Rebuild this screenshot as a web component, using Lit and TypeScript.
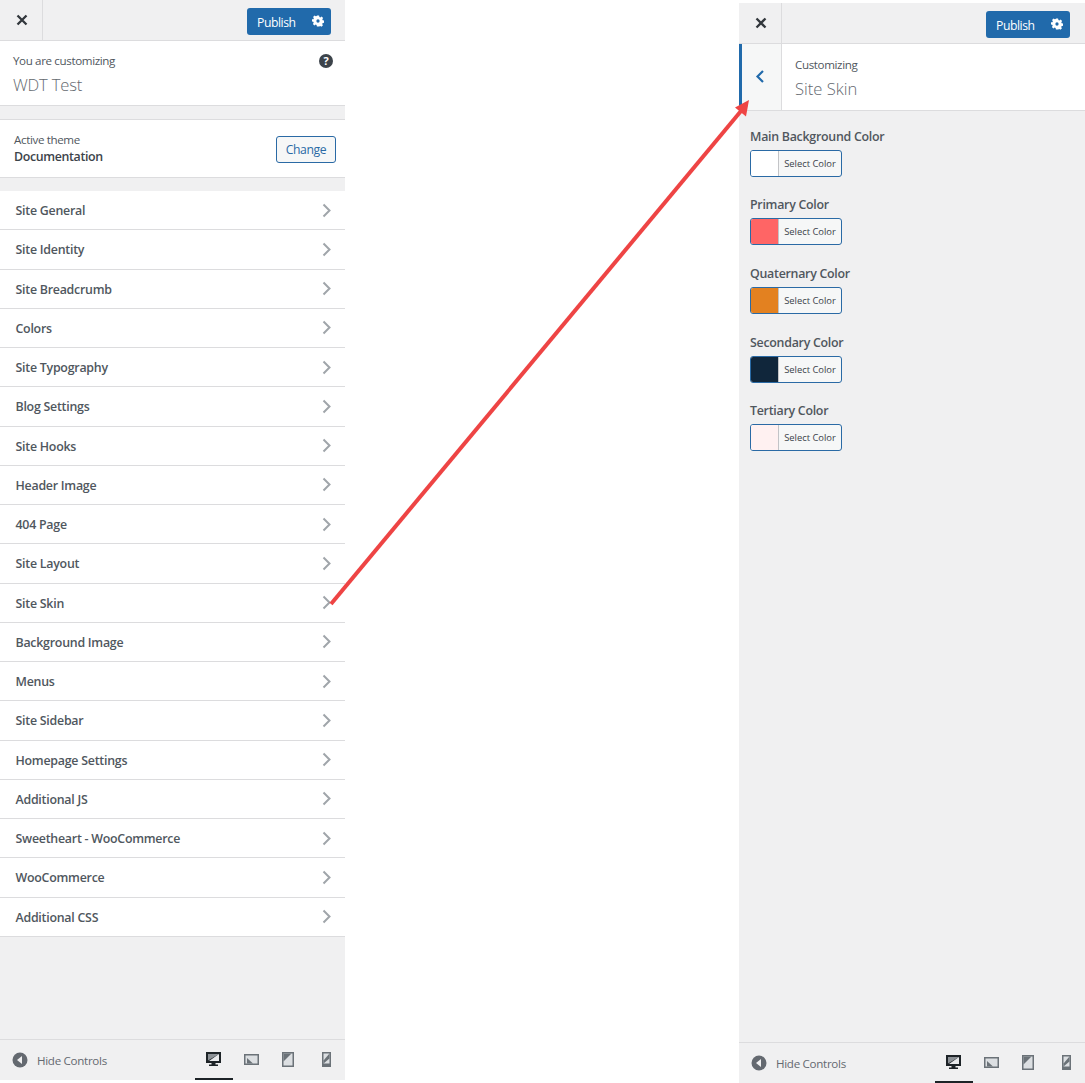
import { LitElement, html, css, svg } from "lit";
import { customElement } from "lit/decorators.js";

const SECTIONS = ["Site General","Site Identity","Site Breadcrumb","Colors","Site Typography","Blog Settings","Site Hooks","Header Image","404 Page","Site Layout","Site Skin","Background Image","Menus","Site Sidebar","Homepage Settings","Additional JS","Sweetheart - WooCommerce","WooCommerce","Additional CSS"];
const COLORS: [string, string][] = [["Main Background Color","#ffffff"],["Primary Color","#ff6565"],["Quaternary Color","#e38120"],["Secondary Color","#10263b"],["Tertiary Color","#fff1f1"]];

const closeIcon = html`<svg class="x" width="12" height="12" viewBox="0 0 12 12"><path d="M1.5 1.5l9 9M10.5 1.5l-9 9" stroke="#32373c" stroke-width="2.3" fill="none"/></svg>`;
const gear = html`<svg class="gear" width="12" height="12" viewBox="-1 0 22 20"><path fill="#fff" fill-rule="evenodd" d="M8 0h4l.6 2.700 1.700.7 2.300-1.500 2.800 2.800-1.500 2.300.7 1.700 2.400.6v4l-2.700.6-.7 1.700 1.500 2.300-2.800 2.800-2.300-1.500-1.700.7L12 20H8l-.6-2.700-1.700-.7-2.300 1.500L.6 15.300l1.500-2.300-.7-1.700L-1 10.700v-4l2.700 0 .7-1.700L.9 2.700 3.700-.1 6 1.400l1.700-.7z M10 13a3 3 0 100-6 3 3 0 000 6z"/></svg>`;

const devices = [
  svg`<path fill="#1d2327" d="M0 0h15v11H9.500v1.500H12V14H3v-1.500h2.500V11H0z"/><path fill="#8c9196" d="M2 2h11L2 8.500z"/><path fill="#e9eaec" d="M13 2v7H3z"/>`,
  svg`<path fill="#6b7278" d="M0 2h15v11H0z"/><path fill="#dcdfe2" d="M1.500 3.500h12v8h-12z"/><path fill="#6b7278" d="M3 6l6 5.500H3z"/>`,
  svg`<path fill="#6b7278" d="M1 0h12v15H1z"/><path fill="#dcdfe2" d="M2.500 1.500h9v12h-9z"/><path fill="#6b7278" d="M2.500 1.500h8l-8 8z"/>`,
  svg`<path fill="#6b7278" d="M3 0h9v15H3z"/><path fill="#dcdfe2" d="M4.500 1.500h6v10h-6z"/><path fill="#6b7278" d="M10.500 1.500v5l-6 5v-3z"/>`,
];

const footer = html`<div class="footer">
  <div class="hide">
    <svg width="16" height="16" viewBox="0 0 16 16"><circle cx="8" cy="8" r="7.500" fill="#646970"/><path d="M10 4v8L5 8z" fill="#f0f0f1"/></svg>
    <span>Hide Controls</span>
  </div>
  <div class="devices">
    ${devices.map((d, i) => html`<div class="dev ${i === 0 ? "on" : ""}"><svg width="15" height="15" viewBox="0 0 15 15">${d}</svg></div>`)}
  </div>
</div>`;

const publish = html`<div class="publish"><span>Publish</span>${gear}</div>`;
const chevron = html`<svg class="chev" width="10" height="15" viewBox="0 0 10 15"><path d="M1.500 1.500l6 6-6 6" fill="none" stroke="#a0a5aa" stroke-width="2"/></svg>`;

@customElement("app-root")
export class AppRoot extends LitElement {
  static styles = css`
    :host { display: block; position: relative; width: 1085px; height: 1083px; background: #fff; font-family: "Open Sans", "Noto Sans", sans-serif; color: #50575e; overflow: hidden; }
    * { box-sizing: border-box; }
    .page { display: flex; justify-content: space-between; }
    .panel { width: 345px; height: 1080px; background: #f0f0f1; display: flex; flex-direction: column; }
    .right { width: 346px; margin-top: 3px; }
    .top { height: 41px; display: flex; align-items: center; justify-content: space-between; border-bottom: 1px solid #dcdcde; padding-right: 14px; flex: none; }
    .close { width: 43px; height: 40px; border-right: 1px solid #dcdcde; display: flex; align-items: center; justify-content: center; padding-left: 1px; }
    .right .top { padding-right: 15px; }
    .publish { width: 84px; height: 27px; margin-top: 2px; background: #216aab; border-radius: 3px; color: #fff; display: flex; align-items: center; justify-content: space-between; padding: 0 7px 0 10px; font-size: 12.2px; letter-spacing: -0.45px; }
    .publish span { padding-top: 2px; }
    .gear { margin-top: -1px; }
    .info { height: 65px; background: #fff; border-bottom: 1px solid #dcdcde; padding: 11px 13px 0; position: relative; flex: none; }
    .small { font-size: 11.6px; line-height: 18px; color: #50575e; letter-spacing: -0.37px; }
    .title { font-size: 16.6px; line-height: 24px; margin-top: 3px; color: #646970; font-weight: 300; letter-spacing: -0.2px; }
    .help { position: absolute; right: 12px; top: 13px; }
    .spacer1 { height: 13px; flex: none; }
    .theme { height: 59px; background: #fff; border-top: 1px solid #dcdcde; border-bottom: 1px solid #dcdcde; display: flex; align-items: center; justify-content: space-between; padding: 0 9px 0 14px; flex: none; }
    .theme .small { line-height: 16px; }
    .theme b { display: block; font-size: 12.4px; font-weight: 600; line-height: 17px; color: #3c434a; letter-spacing: -0.35px; }
    .change { width: 60px; height: 27px; margin-top: 2px; border: 1px solid #2a6aa5; border-radius: 3px; background: #f6f7f7; color: #2a6aa5; font-size: 12.2px; letter-spacing: -0.4px; display: flex; align-items: center; justify-content: center; }
    .spacer2 { height: 13px; flex: none; }
    .list { flex: none; }
    .row { height: 39.25px; background: #fff; border-bottom: 1px solid #dcdcde; padding: 0 13px 0 15.500px; display: flex; align-items: center; justify-content: space-between; font-size: 12.4px; font-weight: 600; color: #50575e; letter-spacing: -0.25px; }
    .row span { padding-top: 1px; }
    .chev { flex: none; }
    .footer { margin-top: auto; height: 41px; border-top: 1px solid #dcdcde; display: flex; align-items: center; justify-content: space-between; flex: none; position: relative; }
    .hide { display: flex; align-items: center; gap: 9px; padding-left: 12px; font-size: 11.6px; color: #646970; letter-spacing: -0.3px; }
    .devices { display: flex; align-self: stretch; }
    .dev { width: 37.500px; display: flex; align-items: center; justify-content: center; border-bottom: 2px solid transparent; }
    .dev.on { border-bottom-color: #1d2327; }
    .sec { height: 67px; background: #fff; border-bottom: 1px solid #dcdcde; display: flex; flex: none; }
    .back { width: 43px; border-left: 3px solid #216aab; border-right: 1px solid #dcdcde; background: #f6f7f7; display: flex; align-items: center; justify-content: center; padding: 0 3px 2px 0; }
    .sec-text { padding: 12px 13px; }
    .sec-text .title { margin-top: 3px; letter-spacing: 0; }
    .controls { padding: 16.600px 11px 0; }
    .ctl { height: 68.700px; }
    .ctl label { display: block; font-size: 12.4px; font-weight: 600; line-height: 17px; color: #50575e; letter-spacing: -0.27px; }
    .pick { display: flex; width: 92px; height: 27px; margin-top: 5px; border: 1px solid #2a6aa5; border-radius: 3px; overflow: hidden; background: #f6f7f7; }
    .sw { width: 28px; border-right: 1px solid #c3c4c7; flex: none; }
    .pick span { flex: 1; text-align: center; font-size: 9.400px; line-height: 26px; color: #3c434a; }
    .arrow { position: absolute; left: 0; top: 0; pointer-events: none; }
  `;

  render() {
    return html`<div class="page">
      <div class="panel">
        <div class="top"><div class="close">${closeIcon}</div>${publish}</div>
        <div class="info">
          <div class="small">You are customizing</div>
          <div class="title">WDT Test</div>
          <svg class="help" width="14" height="14" viewBox="0 0 14 14"><circle cx="7" cy="7" r="7" fill="#3c434a"/><text x="7" y="10.800" text-anchor="middle" font-size="11" font-weight="700" font-family="Open Sans" fill="#fff">?</text></svg>
        </div>
        <div class="spacer1"></div>
        <div class="theme">
          <div><div class="small">Active theme</div><b>Documentation</b></div>
          <div class="change">Change</div>
        </div>
        <div class="spacer2"></div>
        <div class="list">${SECTIONS.map((s) => html`<div class="row"><span>${s}</span>${chevron}</div>`)}</div>
        ${footer}
      </div>
      <div class="panel right">
        <div class="top"><div class="close">${closeIcon}</div>${publish}</div>
        <div class="sec">
          <div class="back"><svg width="10" height="15" viewBox="0 0 10 15"><path d="M8 2l-5.500 5.500 5.500 5.500" fill="none" stroke="#216aab" stroke-width="2.200"/></svg></div>
          <div class="sec-text">
            <div class="small">Customizing</div>
            <div class="title">Site Skin</div>
          </div>
        </div>
        <div class="controls">
          ${COLORS.map(([n, c]) => html`<div class="ctl"><label>${n}</label><div class="pick"><div class="sw" style="background:${c}"></div><span>Select Color</span></div></div>`)}
        </div>
        ${footer}
      </div>
    </div>
    <svg class="arrow" width="1085" height="1083" viewBox="0 0 1085 1083">
      <path d="M331 604L741 111" stroke="#ee4444" stroke-width="4" fill="none"/>
      <path d="M749 100l-3 16.500-11-9z" fill="#ee4444"/>
    </svg>`;
  }
}
